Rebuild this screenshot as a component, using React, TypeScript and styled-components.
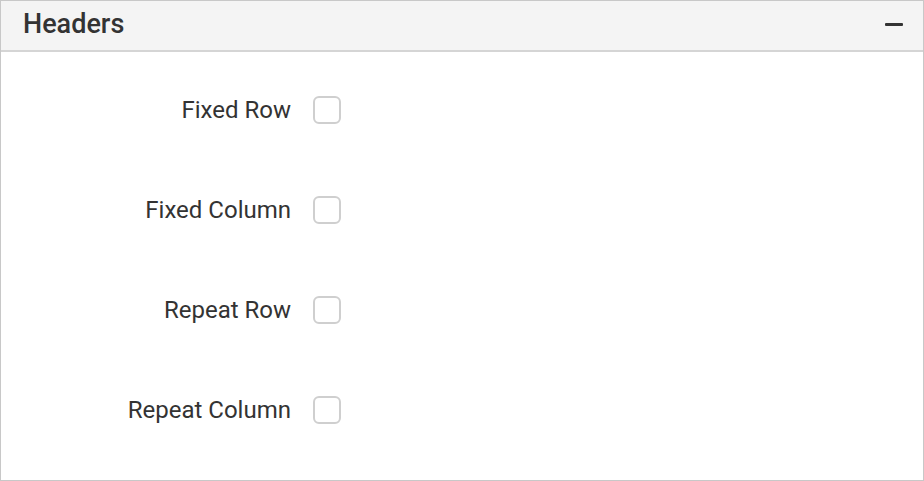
import React from 'react';
import styled, { createGlobalStyle } from 'styled-components';

const GlobalStyle = createGlobalStyle`
	html, body {
		margin: 0;
		padding: 0;
		background: #ffffff;
	}
	body {
		font-family: Roboto, 'Liberation Sans', sans-serif;
	}
`;

const options = ['Fixed Row', 'Fixed Column', 'Repeat Row', 'Repeat Column'];

const App = () => {
	return (
		<>
			<GlobalStyle />
			<Panel>
				<PanelHeader>
					<h2>Headers</h2>
					<CollapseButton aria-label='Collapse' />
				</PanelHeader>
				<PanelBody>
					{options.map((label) => (
						<OptionRow key={label}>
							<label>{label}</label>
							<CheckBox type='checkbox' />
						</OptionRow>
					))}
				</PanelBody>
			</Panel>
		</>
	);
};

export default App;

const Panel = styled.div`
	box-sizing: border-box;
	width: 924px;
	height: 481px;
	border: 1px solid #c8c8c8;
	display: flex;
	flex-direction: column;
	background: #ffffff;
`;

const PanelHeader = styled.div`
	box-sizing: border-box;
	height: 51px;
	display: flex;
	align-items: center;
	justify-content: space-between;
	padding: 0 20px 3px 22px;
	background: #f4f4f4;
	border-bottom: 2px solid #d5d5d5;

	h2 {
		margin: 0;
		font-size: 27px;
		font-weight: 500;
		color: #333333;
	}
`;

const CollapseButton = styled.span`
	display: block;
	width: 18px;
	height: 3px;
	border-radius: 1px;
	background: #333333;
`;

const PanelBody = styled.div`
	display: grid;
	grid-auto-rows: 100px;
	padding-top: 8px;
`;

const OptionRow = styled.div`
	display: grid;
	grid-template-columns: 290px 28px;
	column-gap: 22px;
	align-items: center;

	label {
		text-align: right;
		font-size: 24px;
		color: #333333;
	}
`;

const CheckBox = styled.input`
	appearance: none;
	box-sizing: border-box;
	margin: 0;
	width: 28px;
	height: 28px;
	border: 2px solid #cfcfcf;
	border-radius: 6px;
	background: #ffffff;
`;
